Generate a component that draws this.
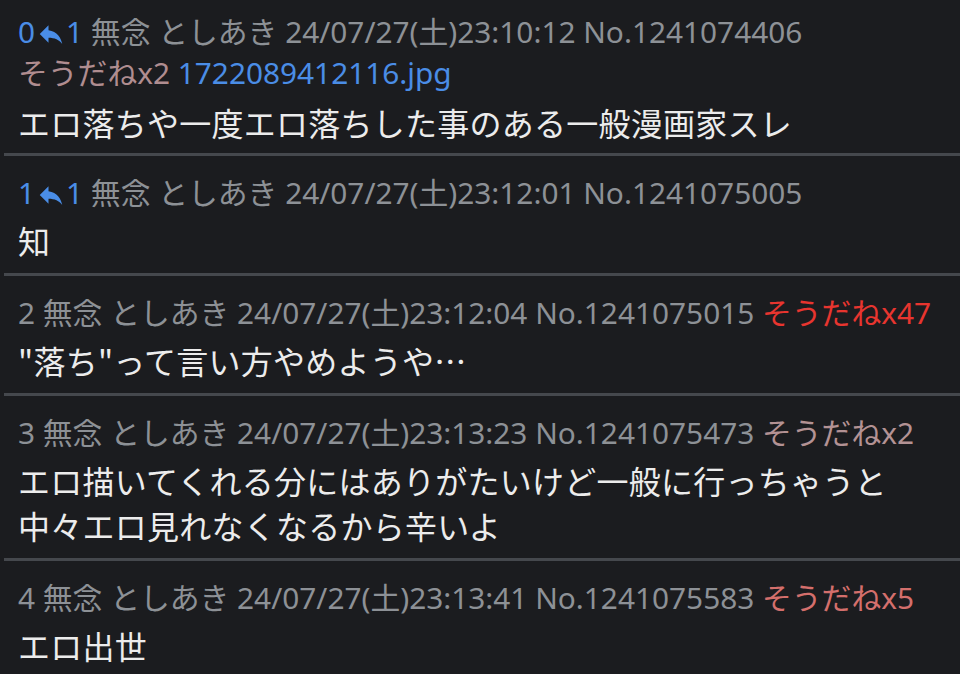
import React from "react";

const ReplyIcon = () => (
  <svg viewBox="0 0 24 24" className="inline-block w-[30px] h-[30px] ml-[1px] align-[-6px]" fill="#4a8de6">
    <path d="M10 9V5l-7 7 7 7v-4.1c5 0 8.5 1.6 11 5.1-1-5-4-10-11-11z" />
  </svg>
);

type Post = {
  no: number;
  replies?: number;
  time: string;
  id: string;
  sodane?: { text: string; color: string; inline: boolean };
  file?: string;
  lines: string[];
};

const posts: Post[] = [
  {
    no: 0,
    replies: 1,
    time: "24/07/27(土)23:10:12",
    id: "No.1241074406",
    sodane: { text: "そうだねx2", color: "text-[#b08d90]", inline: false },
    file: "1722089412116.jpg",
    lines: ["エロ落ちや一度エロ落ちした事のある一般漫画家スレ"],
  },
  {
    no: 1,
    replies: 1,
    time: "24/07/27(土)23:12:01",
    id: "No.1241075005",
    lines: ["知"],
  },
  {
    no: 2,
    time: "24/07/27(土)23:12:04",
    id: "No.1241075015",
    sodane: { text: "そうだねx47", color: "text-[#e8352f]", inline: true },
    lines: ['"落ち"って言い方やめようや…'],
  },
  {
    no: 3,
    time: "24/07/27(土)23:13:23",
    id: "No.1241075473",
    sodane: { text: "そうだねx2", color: "text-[#b39294]", inline: true },
    lines: ["エロ描いてくれる分にはありがたいけど一般に行っちゃうと", "中々エロ見れなくなるから辛いよ"],
  },
  {
    no: 4,
    time: "24/07/27(土)23:13:41",
    id: "No.1241075583",
    sodane: { text: "そうだねx5", color: "text-[#d46f6c]", inline: true },
    lines: ["エロ出世"],
  },
];

export default function App() {
  return (
    <div
      className="w-[960px] h-[674px] overflow-hidden bg-[#1b1c1f]"
      style={{ fontFamily: '"Noto Sans", "Noto Sans CJK JP", sans-serif' }}
    >
      {posts.map((p, i) => (
        <div key={p.no}>
          {i > 0 && <div className="ml-[4px] h-[3px] bg-[#45484d]" />}
          <div className={`px-[18px] ${i === 0 ? "pt-[11px] pb-[8px]" : "pt-[16px] pb-[10px]"}`}>
            <div className="text-[29.8px] leading-[41px] text-[#8d9196] whitespace-nowrap">
              {p.replies !== undefined ? (
                <>
                  <span className="text-[#4a8de6]">{p.no}</span>
                  <ReplyIcon />
                  <span className="text-[#4a8de6]">{p.replies}</span>
                </>
              ) : (
                <span>{p.no}</span>
              )}{" "}
              無念 としあき {p.time} {p.id}
              {p.sodane && p.sodane.inline && (
                <>
                  {" "}
                  <span className={p.sodane.color}>{p.sodane.text}</span>
                </>
              )}
            </div>
            {p.sodane && !p.sodane.inline && (
              <div className="text-[29.8px] leading-[41px] whitespace-nowrap">
                <span className={p.sodane.color}>{p.sodane.text}</span>{" "}
                <span className="text-[#4a8de6]">{p.file}</span>
              </div>
            )}
            <div
              className={`${i === 0 ? "mt-[7px]" : "mt-[5px]"} text-[32px] tracking-[0.25px] leading-[45px] text-[#ececec]`}
              style={{ fontFamily: '"Noto Sans CJK JP", "Noto Sans", sans-serif' }}
            >
              {p.lines.map((l, k) => (
                <div key={k}>{l}</div>
              ))}
            </div>
          </div>
        </div>
      ))}
    </div>
  );
}
